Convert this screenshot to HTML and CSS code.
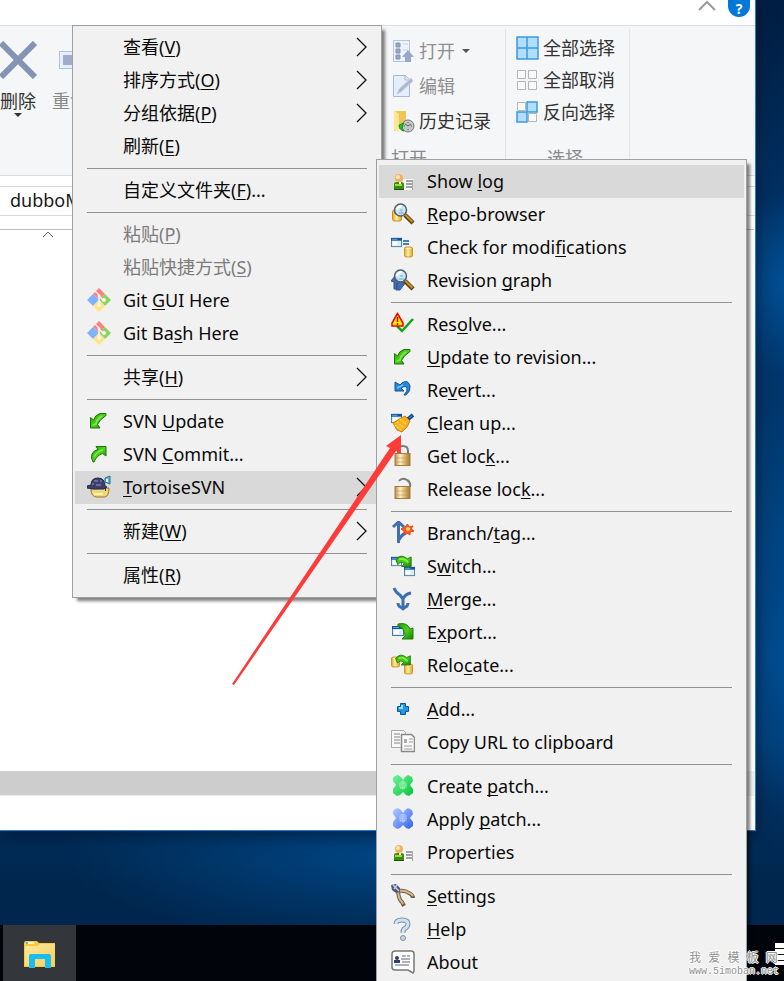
FILE: index.html
```html
<!DOCTYPE html>
<html lang="zh-CN">
<head>
<meta charset="utf-8">
<title>dubbo</title>
<link rel="stylesheet" href="styles.css">
</head>
<body>
<svg class="sprite" aria-hidden="true">
  <defs>
    <linearGradient id="g-green" x1="0" y1="0" x2="1" y2="1"><stop offset="0" stop-color="#2d9a08"/><stop offset=".5" stop-color="#4bd31f"/><stop offset="1" stop-color="#1d7d05"/></linearGradient>
    <linearGradient id="g-gold" x1="0" x2="1"><stop offset="0" stop-color="#e3a52c"/><stop offset=".45" stop-color="#fff0a0"/><stop offset="1" stop-color="#dfa02a"/></linearGradient>
    <linearGradient id="g-lock" x1="0" x2="1"><stop offset="0" stop-color="#b98d4d"/><stop offset=".35" stop-color="#fff3cd"/><stop offset=".6" stop-color="#e3c078"/><stop offset="1" stop-color="#a3772f"/></linearGradient>
    <linearGradient id="g-folder" x1="0" y1="0" x2="1" y2="1"><stop offset="0" stop-color="#ffe9a3"/><stop offset="1" stop-color="#f8cf53"/></linearGradient>
    <linearGradient id="g-mint" x1="0" y1="0" x2="1" y2="1"><stop offset="0" stop-color="#6df59b"/><stop offset="1" stop-color="#08c437"/></linearGradient>
    <linearGradient id="g-blue" x1="0" y1="0" x2="1" y2="1"><stop offset="0" stop-color="#b4ccff"/><stop offset="1" stop-color="#2f62f0"/></linearGradient>
  </defs>
  <symbol id="win" viewBox="0 0 12 10"><rect x=".5" y=".5" width="11" height="9" fill="#d6effb" stroke="#4e7aa0"/><path d="M0 0h12v3H0z" fill="#164f9c"/><path d="M1 1h6v1H1z" fill="#68a8e8"/><path d="M2 4h5v4H2z" fill="#fff"/></symbol>
  <symbol id="cyl" viewBox="0 0 10 12"><rect x=".5" y=".5" width="9" height="11" rx="2" fill="url(#g-gold)" stroke="#c98e1c"/><path d="M2 2h6" stroke="#fff5b8"/></symbol>
  <symbol id="lens" viewBox="0 0 24 24"><path d="M14 13l8 8" stroke="#5a3a08" stroke-width="4.500"/><path d="M14.500 13l7 7" stroke="#d0912c" stroke-width="2"/><circle cx="9.500" cy="8" r="6" fill="#c4e6f7" fill-opacity=".85" stroke="#555d66" stroke-width="1.500"/><path d="M6 8q1-4 5-4" stroke="#fff" stroke-width="2" fill="none"/><path d="M8 11h5M9 8h3" stroke="#78a9ce"/></symbol>
  <symbol id="log" viewBox="0 0 24 24"><rect x="12" y="10" width="10" height="11" fill="#fafafa"/><path d="M15 12h6M15 15h6M15 18h6" stroke="#81878d" stroke-width="1.500"/><path d="M21.500 11v10" stroke="#aaa"/><path d="M3 21v-6q0-2 3-2h4q3 0 3 2v6z" fill="#388e0b"/><path d="M4 16h7" stroke="#9ade3d" stroke-width="2"/><path d="M3 20.500h10" stroke="#1c5402"/><circle cx="8" cy="9" r="4" fill="#f1b25c"/><circle cx="7" cy="8" r="2" fill="#ffe7b2"/><path d="M8 13h2v2H8z" fill="#fff"/></symbol>
  <symbol id="down" viewBox="0 0 24 24"><path d="M3.500 8.500v10.500H13l-2.500-3.500q2-5 8.500-9V4.500h-6Q8 6 6.500 11z" fill="url(#g-green)" stroke="#1e7505"/><path d="M6 16l3-1q1-6 6-8" stroke="#7eed4b" stroke-width="1.500" fill="none"/></symbol>
  <symbol id="up" viewBox="0 0 24 24"><path d="M9 4.500h10V14l-3.500-2.500Q10 13 7 20H6q-2.500-4-1-8 2-4 6-4.500z" fill="url(#g-green)" stroke="#1e7505"/><path d="M16 8q-6 1-9 7" stroke="#7eed4b" stroke-width="1.500" fill="none"/></symbol>
  <symbol id="swoop" viewBox="0 0 24 24"><path d="M4 5q5-7 12-1l4-2v10H10l3-3Q9 6 6 10z" fill="url(#g-green)" stroke="#1e8007"/><path d="M7 5q5-3 10 3" stroke="#83ec45" stroke-width="2" fill="none"/></symbol>
  <symbol id="git" viewBox="0 0 24 24"><path d="M12 0l6 6-6 6-6-6z" fill="#ff8080"/><path d="M6 6l6 6-6 6-6-6z" fill="#80b3ff"/><path d="M18 6l6 6-6 6-6-6z" fill="#8dd35f"/><path d="M12 12l6 6-6 6-6-6z" fill="#ffe680"/><path d="M8 3l4 4v11M12 8l4 4" stroke="#f7f4f2" stroke-width="1.500" fill="none"/><circle cx="12" cy="8" r="1.500" fill="#f7f4f2"/><circle cx="12" cy="17" r="2" fill="#f7f4f2"/><circle cx="17" cy="12" r="2" fill="#f7f4f2"/></symbol>
  <symbol id="patch" viewBox="0 0 24 24"><path d="M4 2l3-1 3 2 2 3 2-3 3-2 4 2 1 4-3 4 3 4v4l-4 3-3-1-3-3-3 3-3 1-4-3v-4l3-4-3-4V4z"/><circle cx="12" cy="11" r="4" fill="#fff" fill-opacity=".3"/><path d="M12 7v9M9 14h6" stroke="#fff" stroke-opacity=".5" stroke-width="1" stroke-dasharray="1 1"/></symbol>
  <symbol id="chev" viewBox="0 0 12 20"><path d="M1 1l9 9-9 9" fill="none" stroke="#111" stroke-width="1.300"/></symbol>
</svg>

<main class="desktop">
  <section class="window">
    <header class="titlebar">
      <svg class="collapse" viewBox="0 0 18 12"><path d="M1 10l8-8 8 8" fill="none" stroke="#9a9a9a" stroke-width="2"/></svg>
      <button class="help" aria-label="帮助">?</button>
    </header>
    <div class="ribbon">
      <div class="group organize">
        <button class="big delete">
          <svg viewBox="0 0 38 38"><path d="M2 2l34 34M36 2L2 36" stroke="#8494b5" stroke-width="6"/></svg>
          <span>删除</span><i class="drop"></i>
        </button>
        <button class="big rename">
          <svg viewBox="0 0 38 38"><rect x=".5" y="10.500" width="37" height="17" fill="#e6effb" stroke="#aec2df"/><rect x="4" y="14" width="30" height="10" fill="#9dadcb"/></svg>
          <span>重命名</span>
        </button>
      </div>
      <div class="group open">
        <button class="cmd dim"><svg viewBox="0 0 24 24"><rect x="2.500" y="1.500" width="16" height="21" fill="#edf3fa" stroke="#b7c6dd"/><path d="M5 4h4v4H5zM5 10h4v4H5zM5 16h4v4H5z" fill="#98a9c6" stroke="#7f93b5"/><path d="M12 5h5M12 11h5" stroke="#c3d0e2"/><path d="M17 11l6 7h-3v5h-6v-5h-3z" fill="#96a8c8"/></svg><span>打开</span><i class="drop"></i></button>
        <button class="cmd dim"><svg viewBox="0 0 24 24"><path d="M2.500 1.500h12l4 4v17h-16z" fill="#e5eef9" stroke="#a8b9d5"/><path d="M14 2v4h4" fill="none" stroke="#a8b9d5"/><path d="M6 20l2-5L20 4l2 3L10 18z" fill="#a9b9d2" stroke="#c9d5e5"/></svg><span>编辑</span></button>
        <button class="cmd"><svg viewBox="0 0 24 24"><path d="M3 2h12v16l-12 4z" fill="#efc554"/><path d="M3 1l5 4v18l-5-2z" fill="#ffe798"/><circle cx="17" cy="17" r="6" fill="#c5c7c8" stroke="#777"/><path d="M14 15l3 2 3-2M17 13v1M17 20v1M13 17h1M20 17h1" stroke="#555" fill="none"/><path d="M8 16l5-2-1 2q-2 4 1 6-5-1-5-6z" fill="#20bd36" stroke="#109624"/></svg><span>历史记录</span></button>
        <div class="caption">打开</div>
      </div>
      <div class="group select">
        <button class="cmd"><svg viewBox="0 0 24 24"><g fill="#b3defb" stroke="#3a9be5" stroke-width="1.500"><path d="M2 1h10v11H2zM12 1h11v11H12zM2 12h10v11H2zM12 12h11v11H12z"/></g></svg><span>全部选择</span></button>
        <button class="cmd"><svg viewBox="0 0 24 24"><g fill="#f9f9f9" stroke="#b6b6b6"><path d="M2.500 2.500h8v8h-8zM13.500 2.500h8v8h-8zM2.500 13.500h8v8h-8zM13.500 13.500h8v8h-8z"/></g></svg><span>全部取消</span></button>
        <button class="cmd"><svg viewBox="0 0 24 24"><g fill="#f9f9f9" stroke="#b6b6b6"><path d="M2.500 2.500h8v8h-8zM13.500 13.500h8v8h-8z"/></g><g fill="#b3defb" stroke="#3a9be5" stroke-width="1.500"><path d="M12 2h10v10H12zM2 12h10v10H2z"/></g></svg><span>反向选择</span></button>
        <div class="caption">选择</div>
      </div>
    </div>
    <div class="address">dubboMall</div>
    <div class="files"><svg class="sort" viewBox="0 0 12 7"><path d="M1 6l5-5 5 5" fill="none" stroke="#666"/></svg></div>
    <div class="hscroll"><div class="thumb"></div></div>
    <footer class="status"></footer>
  </section>
  <nav class="taskbar">
    <button class="task" aria-label="文件资源管理器"><svg viewBox="0 0 32 28"><path d="M0 26V2q0-2 2-2h11l2 2h16v24z" fill="#f9ca39"/><path d="M1 5h13l2-2h15v22H1z" fill="url(#g-folder)"/><path d="M2 2h8" stroke="#fff" stroke-width="1.500"/><path d="M2 2h2" stroke="#12bdec" stroke-width="1.500"/><path d="M5 27V15q0-2 2-2h18q2 0 2 2v12h-6v-9H11v9z" fill="#18bdf1"/></svg></button>
    <span class="tray"></span>
  </nav>

  <menu class="menu context">
    <li><button><span>查看(<u>V</u>)</span><svg class="chev"><use href="#chev"/></svg></button></li>
    <li><button><span>排序方式(<u>O</u>)</span><svg class="chev"><use href="#chev"/></svg></button></li>
    <li><button><span>分组依据(<u>P</u>)</span><svg class="chev"><use href="#chev"/></svg></button></li>
    <li><button><span>刷新(<u>E</u>)</span></button></li>
    <li class="sep"></li>
    <li><button><span>自定义文件夹(<u>F</u>)...</span></button></li>
    <li class="sep"></li>
    <li><button disabled><span>粘贴(<u>P</u>)</span></button></li>
    <li><button disabled><span>粘贴快捷方式(<u>S</u>)</span></button></li>
    <li><button><svg class="icon"><use href="#git"/></svg><span>Git <u>G</u>UI Here</span></button></li>
    <li><button><svg class="icon"><use href="#git"/></svg><span>Git Ba<u>s</u>h Here</span></button></li>
    <li class="sep"></li>
    <li><button><span>共享(<u>H</u>)</span><svg class="chev"><use href="#chev"/></svg></button></li>
    <li class="sep"></li>
    <li><button><svg class="icon"><use href="#down"/></svg><span>SVN <u>U</u>pdate</span></button></li>
    <li><button><svg class="icon"><use href="#up"/></svg><span>SVN <u>C</u>ommit...</span></button></li>
    <li><button class="active"><svg class="icon" viewBox="0 0 24 24"><path d="M4 14q0 8 6 8h8q4-1 4-9z" fill="#efd778" stroke="#98792e"/><path d="M7 19h9" stroke="#fff2ad" stroke-width="2"/><path d="M0 11l4-1Q4 3 11 3q7 0 7 8l2 1-3 2H7l-7-1z" fill="#3c4068" stroke="#25294c"/><path d="M7 6h4M9 10h5M5 9h2M13 6h2" stroke="#777bb0" stroke-width="1.500"/><path d="M18 3l5-2v8l-5-2z" fill="#6bb6d4" stroke="#276c94"/><path d="M19 4h2v3h-2z" fill="#d3f4ff"/><path d="M18 13h1v3h-1z" fill="#433"/></svg><span><u>T</u>ortoiseSVN</span><svg class="chev"><use href="#chev"/></svg></button></li>
    <li class="sep"></li>
    <li><button><span>新建(<u>W</u>)</span><svg class="chev"><use href="#chev"/></svg></button></li>
    <li class="sep"></li>
    <li><button><span>属性(<u>R</u>)</span></button></li>
  </menu>

  <menu class="menu submenu">
    <li><button class="active"><svg class="icon"><use href="#log"/></svg><span>Show <u>l</u>og</span></button></li>
    <li><button><svg class="icon" viewBox="0 0 24 24"><use href="#cyl" x="1" y="7" width="10" height="13"/><use href="#lens"/></svg><span><u>R</u>epo-browser</span></button></li>
    <li><button><svg class="icon" viewBox="0 0 24 24"><use href="#win" x="0" y="2" width="11" height="11"/><path d="M12 6h6M12 9h6" stroke="#0b5d96" stroke-width="1.500"/><use href="#cyl" x="13" y="11" width="9" height="12"/></svg><span>Check for modi<u>f</u>ications</span></button></li>
    <li><button><svg class="icon" viewBox="0 0 24 24"><path d="M0 13l4-5 4 4-2 2v7H3v-7zM5 22l2-8h8l-6 8z" fill="#416eb0" stroke="#315895"/><use href="#lens"/></svg><span>Revision <u>g</u>raph</span></button></li>
    <li class="sep"></li>
    <li><button><svg class="icon" viewBox="0 0 24 24"><path d="M6 14l5 5L22 7" fill="none" stroke="#12a516" stroke-width="2.500"/><path d="M6.500 1.500L1 11v3h11v-3z" fill="#ffed00" stroke="#f00000" stroke-width="1.500"/><path d="M6.500 5v5M6.500 11v2" stroke="#c40000" stroke-width="1.500"/></svg><span>Res<u>o</u>lve...</span></button></li>
    <li><button><svg class="icon"><use href="#down"/></svg><span><u>U</u>pdate to revision...</span></button></li>
    <li><button><svg class="icon" viewBox="0 0 24 24"><path d="M4 4v9h9l-3-3q5-3 6 0 1 3-3 7h2q5-4 4-9-2-7-8-3L9 7z" fill="#2789d9" stroke="#0956a0"/><path d="M6 10l6-3" stroke="#79c5f8" stroke-width="1.500"/></svg><span>Re<u>v</u>ert...</span></button></li>
    <li><button><svg class="icon" viewBox="0 0 24 24"><use href="#win" x="0" y="2" width="11" height="11"/><path d="M16 9l6-5" stroke="#0a4f8c" stroke-width="4"/><path d="M18 7l3-2" stroke="#3397d4" stroke-width="1"/><path d="M2 12l8-5 4-2 5 5-3 6-5 5-5-2z" fill="#f8ae22" stroke="#cf7a0c"/><path d="M6 11l7 6M9 8l7 6M4 14l6 5" stroke="#ffe43c" stroke-width="1.500" stroke-dasharray="2 1"/></svg><span><u>C</u>lean up...</span></button></li>
    <li><button><svg class="icon" viewBox="0 0 24 24"><path d="M7 10V7q0-5 5-5t5 5v3" fill="none" stroke="#777a7c" stroke-width="2"/><rect x="4" y="9.500" width="15" height="12" fill="url(#g-lock)" stroke="#a77c3b"/><path d="M5 14h13M5 18h13" stroke="#b7985f" stroke-opacity=".6"/></svg><span>Get loc<u>k</u>...</span></button></li>
    <li><button><svg class="icon" viewBox="0 0 24 24"><path d="M8 4q3-4 8-1 4 2 3 7" fill="none" stroke="#777a7c" stroke-width="2"/><rect x="4" y="9.500" width="15" height="12" fill="url(#g-lock)" stroke="#a77c3b"/><path d="M5 14h13M5 18h13" stroke="#b7985f" stroke-opacity=".6"/></svg><span>Release loc<u>k</u>...</span></button></li>
    <li class="sep"></li>
    <li><button><svg class="icon" viewBox="0 0 24 24"><path d="M7.500 22V2M2 6l5.500-5L13 6M8 19q2-5 7-7" fill="none" stroke="#406fae" stroke-width="3"/><path d="M16.500 3l1.500 3 4-1-2 3 3 2-4 1 0 3-3-2-3 1v-3l-3-2 4-2z" fill="#ff5a20" stroke="#e84313"/><circle cx="17" cy="8" r="2" fill="#ffd66b"/></svg><span>Branch/<u>t</u>ag...</span></button></li>
    <li><button><svg class="icon" viewBox="0 0 24 24"><use href="#win" x="0" y="2" width="11" height="11"/><use href="#win" x="13" y="12" width="11" height="11"/><use href="#swoop" x="1" y="1" width="23" height="23"/></svg><span>S<u>w</u>itch...</span></button></li>
    <li><button><svg class="icon" viewBox="0 0 24 24"><path d="M3 1q2 5 6 7l3 4v11M20 6q-6 1-8 6" fill="none" stroke="#406fae" stroke-width="3"/><path d="M7 16q0 4 5 5 5-1 5-5" fill="none" stroke="#406fae" stroke-width="3"/><path d="M9 20h6l-3 4z" fill="#406fae"/></svg><span><u>M</u>erge...</span></button></li>
    <li><button><svg class="icon" viewBox="0 0 24 24"><use href="#win" x="1" y="5" width="12" height="12"/><path d="M7 4q9-2 12 5l3-1v11H11l3-3q0-8-7-10z" fill="url(#g-green)" stroke="#1e8007"/></svg><span>E<u>x</u>port...</span></button></li>
    <li><button><svg class="icon" viewBox="0 0 24 24"><use href="#cyl" x="0" y="3" width="9" height="12"/><use href="#cyl" x="13" y="10" width="9" height="12"/><use href="#swoop" x="1" y="1" width="22" height="22"/></svg><span>Relo<u>c</u>ate...</span></button></li>
    <li class="sep"></li>
    <li><button><svg class="icon" viewBox="0 0 24 24"><path d="M9.500 6.500h5v3h3v5h-3v3h-5v-3h-3v-5h3z" fill="#2698dc" stroke="#075797"/><path d="M8 11h3V8" fill="none" stroke="#8ed9ff" stroke-width="2"/></svg><span><u>A</u>dd...</span></button></li>
    <li><button><svg class="icon" viewBox="0 0 24 24"><path d="M.5.5h12l2 2v15H.5z" fill="#f8f8f8" stroke="#aaa"/><path d="M3 4h6M3 7h6M3 10h6M3 13h6" stroke="#aaa" stroke-width="1.500"/><path d="M10.500 4.500h10l3 3v14h-13z" fill="#fafafa" stroke="#888" stroke-width="1.500"/><path d="M13 9h3v4h-3z" fill="#aaa"/><path d="M18 9h4M18 12h4M13 16h8M13 19h8" stroke="#999"/></svg><span>Copy URL to clipboard</span></button></li>
    <li class="sep"></li>
    <li><button><svg class="icon" fill="url(#g-mint)"><use href="#patch"/></svg><span>Create <u>p</u>atch...</span></button></li>
    <li><button><svg class="icon" fill="url(#g-blue)"><use href="#patch"/></svg><span>Apply <u>p</u>atch...</span></button></li>
    <li><button><svg class="icon"><use href="#log"/></svg><span>Properties</span></button></li>
    <li class="sep"></li>
    <li><button><svg class="icon" viewBox="0 0 24 24"><path d="M7 7q7-1 11 2 4 2 4 5M7 8q1 8 4 10l2 4" fill="none" stroke="#6f6048" stroke-width="4"/><path d="M7 7q7-1 11 2 3 1 4 3M7 8q1 8 4 10l1 2" fill="none" stroke="#d6b587" stroke-width="2"/><path d="M0 1l5-1 4 4v4L5 9 1 6z" fill="#4d5873"/><path d="M2 1l6 6M6 1L3 5" stroke="#c3cee0" stroke-width="1.500"/></svg><span><u>S</u>ettings</span></button></li>
    <li><button><svg class="icon" viewBox="0 0 24 24"><path d="M5 7q0-4 6-4t6 4q0 3-4 5-1 1-1 4" fill="none" stroke="#7890a5" stroke-width="5"/><path d="M5 7q0-4 6-4t6 4q0 3-4 5-1 1-1 4" fill="none" stroke="#cfe2f0" stroke-width="3"/><circle cx="12" cy="21" r="2.500" fill="#bfd7e8" stroke="#7890a5"/></svg><span><u>H</u>elp</span></button></li>
    <li><button><svg class="icon" viewBox="0 0 24 24"><path d="M4 1h16q3 0 3 3v17l-1 2-5-3H4q-3 0-3-3V4q0-3 3-3z" fill="#fff" stroke="#777" stroke-width="1.500"/><circle cx="6" cy="8" r="2" fill="#333d70"/><path d="M3 10h6v3H3z" fill="#333d70"/><path d="M11 6h4M16 6h3M10 9h9M11 12h8M4 15h14" stroke="#596285"/></svg><span>About</span></button></li>
  </menu>

  <svg class="pointer" viewBox="232 435 170 250" aria-hidden="true"><path d="M401 435L386 446l4 2L232 684l2 1 162-234 5 3z" fill="#fd3b39"/></svg>
  <div class="mark"><div class="name">我 爱 模 板 网</div><div class="site">www.5imoban.net</div></div>
</main>
</body>
</html>
```
FILE: styles.css
```css
* { box-sizing: border-box; }

body {
  margin: 0;
  overflow: hidden;
  font: 18px/24px "Noto Sans", "Noto Sans CJK SC", sans-serif;
  color: #1a1a1a;
}

button {
  border: 0;
  padding: 0;
  background: none;
  font: inherit;
  color: inherit;
  white-space: nowrap;
}

svg { flex: none; }
.sprite { position: absolute; width: 0; height: 0; }

.desktop {
  position: relative;
  display: flex;
  flex-direction: column;
  height: 100vh;
  overflow: hidden;
  background:
    radial-gradient(ellipse 60px 90px at 100% 29%, #004f94, transparent),
    radial-gradient(ellipse 70px 150px at 100% 67%, #004d92, transparent),
    radial-gradient(ellipse 70px 130px at 100% 54%, #004480, transparent),
    radial-gradient(ellipse 330px 90px at 50% 87%, #004684, transparent),
    linear-gradient(to bottom, #001e42 0, #00356a 25%, #003a70 75%, #00264d 90%);
}

.window {
  display: flex;
  flex: 1;
  flex-direction: column;
  margin: 0 28px 94px 0;
  border: solid #1c80d2;
  border-width: 0 1px 1px 0;
  background: #fff;
  box-shadow: 0 4px 16px rgba(0, 5, 20, .5);
}

.titlebar {
  display: flex;
  justify-content: flex-end;
  gap: 12px;
  height: 26px;
  padding-right: 5px;
  border-bottom: 1px solid #dadbdc;
}
.collapse { width: 18px; height: 12px; }
.help {
  width: 22px;
  height: 17px;
  border-radius: 0 0 11px 11px;
  background: #0078d7;
  color: #fff;
  font-size: 14px;
  line-height: 14px;
  font-weight: bold;
}

.ribbon {
  display: flex;
  height: 150px;
  border-bottom: 1px solid #dadbdc;
  background: #f5f6f7;
}
.group { margin-top: 3px; }
.open, .select { border-right: 1px solid #e1e3e5; }
.organize { display: flex; flex: none; width: 392px; gap: 15px; margin-left: -1px; }
.big {
  display: flex;
  flex: none;
  flex-direction: column;
  align-items: center;
  height: 92px;
  padding-top: 12px;
  color: #333;
}
.big svg { width: 38px; height: 38px; }
.big span { margin-top: 10px; }
.rename { align-items: flex-start; color: #888; }
.rename svg { margin-left: 7px; }
.drop {
  border: 4px solid transparent;
  border-top-color: currentColor;
  border-bottom: 0;
}
.open { flex: none; width: 115px; padding-top: 4px; }
.select { flex: none; width: 124px; padding: 3px 0 0 9px; }
.cmd { display: flex; align-items: center; gap: 4px; color: #333; }
.cmd svg { width: 24px; height: 24px; }
.open .cmd { height: 35px; }
.select .cmd { height: 32px; }
.open .dim { color: #8f8f8f; }
.cmd .drop { margin-left: 3px; color: #555; }
.caption { padding-top: 8px; color: #8a8a8a; }
.select .caption { padding: 18px 0 0 32px; }

.address {
  height: 30px;
  margin-top: 10px;
  padding: 1px 10px;
  border: solid #d9d9d9;
  border-width: 1px 0;
}
.files {
  flex: 1;
  margin: 13px 1px 0 0;
  border-top: 1px solid #bdbdbd;
}
.sort { display: block; width: 12px; height: 7px; margin: 1px 0 0 42px; }
.hscroll { height: 25px; border-bottom: 1px solid #ededed; background: #efefef; }
.thumb { width: 98%; height: 24px; background: #cdcdcd; }
.status { height: 34px; }

.taskbar {
  display: flex;
  justify-content: space-between;
  height: 56px;
  margin-top: 0;
  padding-left: 3px;
  background: #01040b;
}
.task { width: 73px; background: #33373b; }
.task svg { display: block; width: 32px; height: 28px; margin: 4px auto 0; }
.tray {
  width: 9px;
  height: 22px;
  margin-top: 18px;
  background: repeating-linear-gradient(#fff 0 5px, #111 5px 6px);
}

.window + .taskbar { flex: none; }

.menu {
  position: absolute;
  margin: 0;
  padding: 5px 2px;
  border: 1px solid #a0a0a0;
  background: #f1f1f1;
  box-shadow: 4px 4px 3px -1px rgba(0, 0, 0, .5);
  list-style: none;
}
.context { left: 72px; top: 25px; width: 310px; }
.submenu { left: 376px; top: 159px; width: 371px; }
.menu button {
  display: flex;
  align-items: center;
  width: 100%;
  height: 33px;
  padding: 0 11px 2px 48px;
  color: #0a0a0a;
}
.menu button:disabled { color: #7c7c7c; }
.menu .active { background: #d9d9d9; }
.menu u { text-decoration-thickness: 1px; text-underline-offset: 2px; text-decoration-skip-ink: none; }
.icon { width: 24px; height: 24px; margin: 0 12px 0 -36px; }
.chev { width: 12px; height: 20px; margin-left: auto; }
.sep { height: 11px; padding: 5px 12px; background: #919191 content-box; }

.pointer { position: absolute; left: 232px; top: 435px; width: 170px; height: 250px; }

.mark {
  position: absolute;
  right: 5px;
  bottom: 3px;
  color: #929292;
  text-shadow: 1px 0 #fff, -1px 0 #fff, 0 1px #fff, 0 -1px #fff;
  white-space: nowrap;
}
.name { font: 12px/14px "Liberation Mono", "Noto Sans CJK SC", monospace; }
.site { font: 10px/12px "Liberation Mono", monospace; }
```
